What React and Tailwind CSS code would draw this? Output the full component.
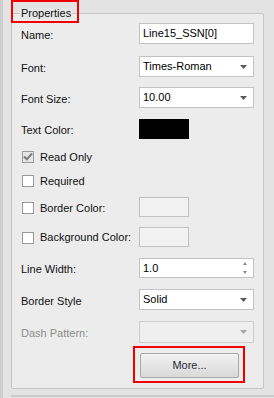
import React from 'react';

const Arrow = ({ color = '#5b5b5b' }) => (
  <svg width="7" height="4" viewBox="0 0 7 4">
    <polygon points="0,0 7,0 3.5,4" fill={color} />
  </svg>
);

const Label = ({ children, muted }) => (
  <span className={`w-[118px] shrink-0 pt-[3px] ${muted ? 'text-[#8c8c8c]' : 'text-[#111]'}`}>{children}</span>
);

const Select = ({ value, disabled }) => (
  <div
    className={`flex h-full w-[115px] items-center justify-between border pl-[3px] pr-[6px] ${
      disabled ? 'border-[#cdcdcd] bg-[#efefef]' : 'border-[#c3c3c3] bg-white'
    }`}
  >
    <span>{value}</span>
    <Arrow color={disabled ? '#a6a6a6' : '#5b5b5b'} />
  </div>
);

const Check = ({ checked }) => (
  <span
    className={`ml-[1px] flex h-[12px] w-[12px] shrink-0 items-center justify-center border ${
      checked ? 'border-[#9a9a9a] bg-[#e6e6e6]' : 'border-[#9a9a9a] bg-white'
    }`}
  >
    {checked && (
      <svg width="10" height="9" viewBox="0 0 10 9">
        <path d="M1 4.5 L3.8 7.3 L9 1.5" stroke="#7d7d7d" strokeWidth="2" fill="none" />
      </svg>
    )}
  </span>
);

const Swatch = ({ color }) =>
  color ? (
    <div className="h-[20px] w-[50px]" style={{ background: color }} />
  ) : (
    <div className="h-[20px] w-[50px] border border-[#c2c2c2] bg-[#f2f2f2]" />
  );

export default function App() {
  return (
    <div
      className="relative h-[398px] w-[274px] overflow-hidden border-l-[3px] border-l-[#cfcfcf] bg-[#e3e3e3] pl-[8px] pt-[13px] text-[11px] leading-none"
      style={{ fontFamily: '"Liberation Sans", Arial, sans-serif' }}
    >
      {/* annotation box around the title */}
      <div className="absolute left-[8px] top-0 z-10 h-[23px] w-[68px] border-2 border-[#f00000]" />

      <div className="relative h-[376px] w-[253px] rounded-[2px] border border-[#c6c6c6] bg-[#ececec] pl-[9px] pt-[9px]">
        <span className="absolute left-[8px] top-[-6px] bg-[#e6e6e6] px-[1px] text-[#111]">Properties</span>

        <div className="flex h-[21px] items-center">
          <Label>Name:</Label>
          <div className="flex h-full w-[115px] items-center border border-[#c3c3c3] bg-white pl-[3px]">Line15_SSN[0]</div>
        </div>

        <div className="mt-[12px] flex h-[21px] items-center">
          <Label>Font:</Label>
          <Select value="Times-Roman" />
        </div>

        <div className="mt-[10px] flex h-[21px] items-center">
          <Label>Font Size:</Label>
          <Select value="10.00" />
        </div>

        <div className="mt-[11px] flex h-[20px] items-center">
          <Label>Text Color:</Label>
          <Swatch color="#000" />
        </div>

        <div className="mt-[7px] flex h-[21px] items-center gap-[6px]">
          <Check checked />
          <span className="pt-[2px] text-[#111]">Read Only</span>
        </div>

        <div className="mt-[3px] flex h-[21px] items-center gap-[6px]">
          <Check />
          <span className="pt-[2px] text-[#111]">Required</span>
        </div>

        <div className="mt-[6px] flex h-[20px] items-center">
          <div className="flex w-[118px] shrink-0 items-center gap-[6px] pt-[2px]">
            <Check />
            <span className="text-[#111]">Border Color:</span>
          </div>
          <Swatch />
        </div>

        <div className="mt-[10px] flex h-[20px] items-center">
          <div className="flex w-[118px] shrink-0 items-center gap-[6px] pt-[1px]">
            <Check />
            <span className="text-[#111]">Background Color:</span>
          </div>
          <Swatch />
        </div>

        <div className="mt-[11px] flex h-[20px] items-center">
          <Label>Line Width:</Label>
          <div className="flex h-full w-[115px] items-center justify-between border border-[#c3c3c3] bg-white pl-[3px] pr-[6px]">
            <span>1.0</span>
            <div className="flex h-full flex-col justify-between py-[3px]">
              <svg width="4" height="3" viewBox="0 0 4 3">
                <polygon points="2,0 4,3 0,3" fill="#8a8a8a" />
              </svg>
              <svg width="4" height="3" viewBox="0 0 4 3">
                <polygon points="0,0 4,0 2,3" fill="#8a8a8a" />
              </svg>
            </div>
          </div>
        </div>

        <div className="mt-[11px] flex h-[21px] items-center">
          <Label>Border Style</Label>
          <Select value="Solid" />
        </div>

        <div className="mt-[11px] flex h-[22px] items-center">
          <Label muted>Dash Pattern:</Label>
          <Select value="" disabled />
        </div>

        <div className="relative ml-[119px] mt-[10px] w-[99px]">
          <button className="flex h-[25px] w-[99px] items-center justify-center rounded-[2px] border border-[#a9a9a9] bg-gradient-to-b from-[#f2f2f2] to-[#d9d9d9] text-[#2a2a3a]">
            More...
          </button>
          {/* annotation box around the button */}
          <div className="absolute left-[-7px] top-[-7px] h-[37px] w-[112px] border-2 border-[#f00000]" />
        </div>
      </div>

      <div className="mt-[6px] h-[2px] w-full bg-[#cacaca]" />
    </div>
  );
}
